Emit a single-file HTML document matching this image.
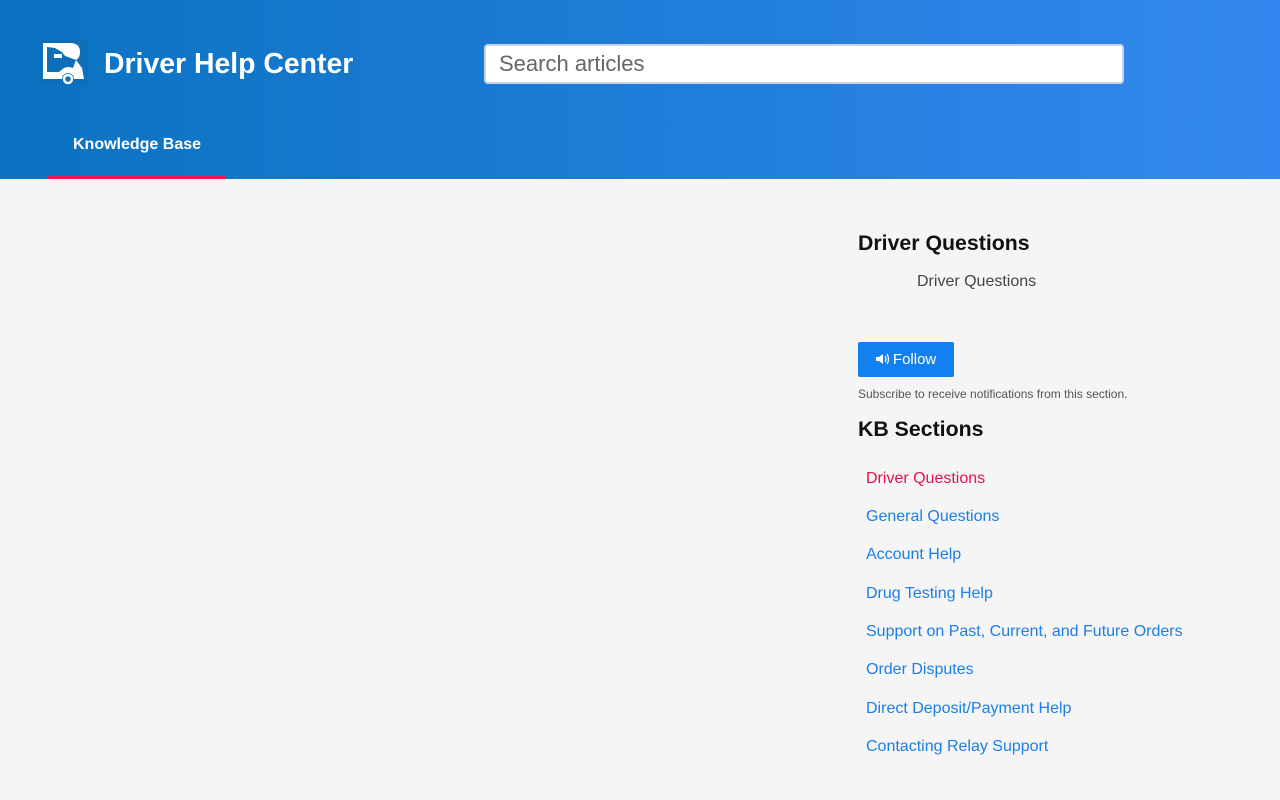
<!DOCTYPE html>
<html><head><meta charset="utf-8"><style>
*{margin:0;padding:0;box-sizing:border-box}
body{width:1280px;height:800px;background:#f5f5f5;font-family:"Liberation Sans",Arial,Helvetica,sans-serif;overflow:hidden;position:relative}
.hdr{position:absolute;left:0;top:0;width:1280px;height:179px;background:linear-gradient(90deg,#0a72c0,#3388f0)}
.logo{position:absolute;left:40px;top:40px;width:48px;height:46px}
.title{position:absolute;left:104px;top:48px;color:#fff;font-weight:bold;font-size:28.4px}
.search{position:absolute;left:484px;top:44px;width:640px;height:40px;background:#fff;border:2px solid #c9d3e0;border-radius:4px;font-size:22px;color:#666;padding:5px 13px}
.tab{position:absolute;left:48px;top:118px;width:178px;height:61px;color:#fff;font-weight:bold;font-size:16px;text-align:center;line-height:54px;border-bottom:3px solid #f0164f}
.side{position:absolute;left:858px}
h2{font-size:21.3px;color:#111;font-weight:bold}
.btn{position:absolute;left:858px;top:342px;width:96px;height:35px;background:#1380f0;border-radius:2px;color:#fff;font-size:15px;line-height:35px;text-align:center}
.sub{position:absolute;left:858px;top:387px;font-size:12px;color:#555}
.links a{position:absolute;left:866px;font-size:16px;color:#1a7fe8;text-decoration:none}
</style></head><body>
<div class="hdr">
<svg class="logo" viewBox="0 0 48 46"><rect width="48" height="46" fill="#0d6fba"/>
<path d="M3 3 H30 Q40 3 40 12 Q40 18 36 20 L42 28 L44 39 H34 A6 6 0 0 0 22 39 H3 Z M7 7 V32 H19 L24 28 Q28 26 33 28 L36 20 L28 17 Q24 16 22 12 L15 8 Z" fill="#fff" fill-rule="evenodd"/>
<path d="M14 14 L22 14 L22 18 L14 18 Z" fill="#fff"/>
<circle cx="28" cy="39" r="4" fill="none" stroke="#fff" stroke-width="2.5"/></svg>
<div class="title">Driver Help Center</div>
<div class="search">Search articles</div>
<div class="tab">Knowledge Base</div>
</div>
<h2 class="side" style="top:231px">Driver Questions</h2>
<div class="side" style="left:917px;top:273px;font-size:16px;color:#444">Driver Questions</div>
<div class="btn"><svg width="13" height="12" viewBox="0 0 13 12" style="vertical-align:-1px"><path d="M0 4h3l4-3v10L3 8H0z" fill="#fff"/><path d="M9 3q2 3 0 6M11 1q3 5 0 10" stroke="#fff" fill="none" stroke-width="1.2"/></svg> Follow</div>
<div class="sub">Subscribe to receive notifications from this section.</div>
<h2 class="side" style="top:417px">KB Sections</h2>
<div class="links">
<a style="top:470px;color:#e8114a">Driver Questions</a>
<a style="top:508px">General Questions</a>
<a style="top:546px">Account Help</a>
<a style="top:585px">Drug Testing Help</a>
<a style="top:623px">Support on Past, Current, and Future Orders</a>
<a style="top:661px">Order Disputes</a>
<a style="top:700px">Direct Deposit/Payment Help</a>
<a style="top:738px">Contacting Relay Support</a>
</div>
</body></html>
